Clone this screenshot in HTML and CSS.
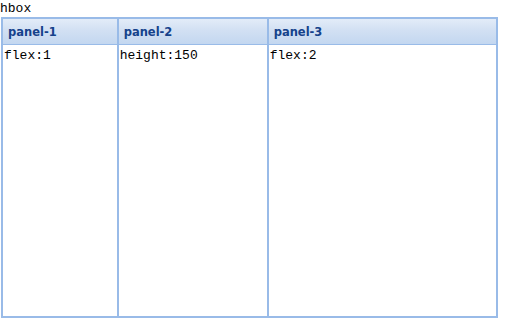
FILE: index.html
```html
<!DOCTYPE html>
<html lang="en">
<head>
    <meta charset="UTF-8">
    <meta name="viewport" content="width=device-width, initial-scale=1.0">
    <title>hbox</title>
    <link rel="stylesheet" href="styles.css">
</head>
<body>
    <div class="caption">hbox</div>
    <div class="hbox">
        <div class="panel flex-1">
            <div class="panel-header">panel-1</div>
            <div class="panel-body">flex:1</div>
        </div>
        <div class="panel fixed">
            <div class="panel-header">panel-2</div>
            <div class="panel-body">height:150</div>
        </div>
        <div class="panel flex-2">
            <div class="panel-header">panel-3</div>
            <div class="panel-body">flex:2</div>
        </div>
    </div>
</body>
</html>
```

FILE: styles.css
```css
body {
    margin: 0;
    background: #fff;
    font-family: 'Liberation Mono', 'DejaVu Sans Mono', monospace;
    font-size: 13px;
    color: #000;
}

.caption {
    height: 17px;
    line-height: 18px;
}

.hbox {
    display: flex;
    width: 495px;
    height: 299px;
    margin-left: 1px;
    border: 1px solid #99bbe8;
}

.panel {
    display: flex;
    flex-direction: column;
    border: 1px solid #99bbe8;
}

.flex-1 {
    flex: 1;
}

.flex-2 {
    flex: 2;
}

.fixed {
    width: 148px;
}

.panel-header {
    height: 25px;
    line-height: 26px;
    padding-left: 5px;
    border-bottom: 1px solid #99bbe8;
    background: linear-gradient(to bottom, #e3ecf8, #d2e0f3 45%, #c3d7f0);
    font-family: 'DejaVu Sans', Tahoma, sans-serif;
    font-size: 11.5px;
    font-weight: bold;
    color: #15428b;
}

.panel-body {
    flex: 1;
    padding: 3px 1px;
    line-height: 16px;
    background: #fff;
}
```
